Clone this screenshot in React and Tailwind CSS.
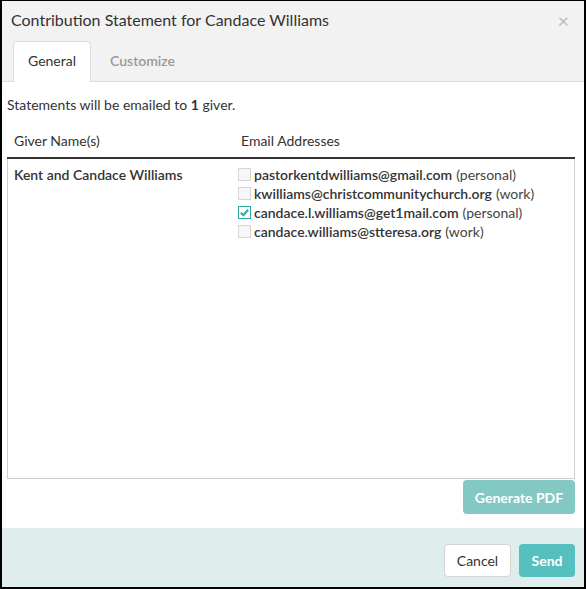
import React from 'react';

const emails = [
  { addr: 'pastorkentdwilliams@gmail.com', kind: 'personal', checked: false },
  { addr: 'kwilliams@christcommunitychurch.org', kind: 'work', checked: false },
  { addr: 'candace.l.williams@get1mail.com', kind: 'personal', checked: true },
  { addr: 'candace.williams@stteresa.org', kind: 'work', checked: false },
];

function Checkbox({ checked }) {
  return (
    <span
      className={
        'inline-flex items-center justify-center w-[13px] h-[13px] ml-[1px] mr-[3px] shrink-0 border ' +
        (checked ? 'border-[#2aa8a6] bg-white' : 'border-[#d6d6d6] bg-[#f7f7f7]')
      }
    >
      {checked && (
        <svg width="11" height="11" viewBox="0 0 12 12">
          <path d="M2 6.3 L4.8 9 L10 3" fill="none" stroke="#2aa8a6" strokeWidth="2.2" />
        </svg>
      )}
    </span>
  );
}

export default function App() {
  return (
    <div
      className="w-[586px] h-[589px] bg-white border-black border-t border-x-2 border-b-2 flex flex-col text-[#333]"
      style={{ fontFamily: 'Lato, "Open Sans", sans-serif' }}
    >
      {/* Header */}
      <div className="h-[81px] shrink-0 bg-[#f2f2f2] border-b border-[#dddddd] flex flex-col relative">
        <div className="pl-[9px] pt-[9px] text-[16px] leading-[20px] text-[#333]">
          Contribution Statement for Candace Williams
        </div>
        <span className="absolute right-[15px] top-[9px] text-[#bbbbbb] text-[20px] leading-[20px]">×</span>
        <div className="flex items-end mt-auto pl-[11px] -mb-px">
          <div className="w-[78px] h-[41px] pb-[3px] bg-white border border-b-0 border-[#dddddd] rounded-t-[4px] flex items-center justify-center text-[14px]">
            General
          </div>
          <div className="h-[41px] pb-[2px] pl-[19px] flex items-center text-[14px] font-semibold text-[#999]">
            Customize
          </div>
        </div>
      </div>

      {/* Body */}
      <div className="flex-1 flex flex-col pl-[5px] pr-[9px] pt-[14px]">
        <div className="text-[14px] leading-[18px]">
          Statements will be emailed to <b>1</b> giver.
        </div>
        <div className="flex mt-[18px] h-[27px] border-b-2 border-[#333] text-[14px] items-start">
          <div className="w-[234px] pl-[7px] leading-[18px]">Giver Name(s)</div>
          <div className="leading-[18px]">Email Addresses</div>
        </div>
        <div className="h-[320px] shrink-0 border border-t-0 border-[#cfcfcf] flex pt-[6px] text-[14px]">
          <div className="w-[229px] pl-[6px] font-semibold leading-[19px]">Kent and Candace Williams</div>
          <div className="flex flex-col">
            {emails.map((e) => (
              <div key={e.addr} className="flex items-center h-[19px] leading-[19px]">
                <Checkbox checked={e.checked} />
                <span className="font-semibold">{e.addr}</span>
                <span className="ml-[4px] text-[#444]">({e.kind})</span>
              </div>
            ))}
          </div>
        </div>
        <div className="flex justify-end mt-[1px]">
          <button className="w-[112px] h-[34px] rounded-[4px] bg-[#84c8c4] text-white font-bold text-[14px]">
            Generate PDF
          </button>
        </div>
      </div>

      {/* Footer */}
      <div className="h-[59px] shrink-0 bg-[#dfeded] border-t border-[#e6eded] flex justify-end items-start pt-[15px] pr-[9px] gap-[8px]">
        <button className="w-[67px] h-[33px] rounded-[4px] bg-white border border-[#d4d4d4] text-[14px] text-[#333]">
          Cancel
        </button>
        <button className="w-[56px] h-[33px] rounded-[4px] bg-[#55c0bd] text-white font-bold text-[14px]">
          Send
        </button>
      </div>
    </div>
  );
}
